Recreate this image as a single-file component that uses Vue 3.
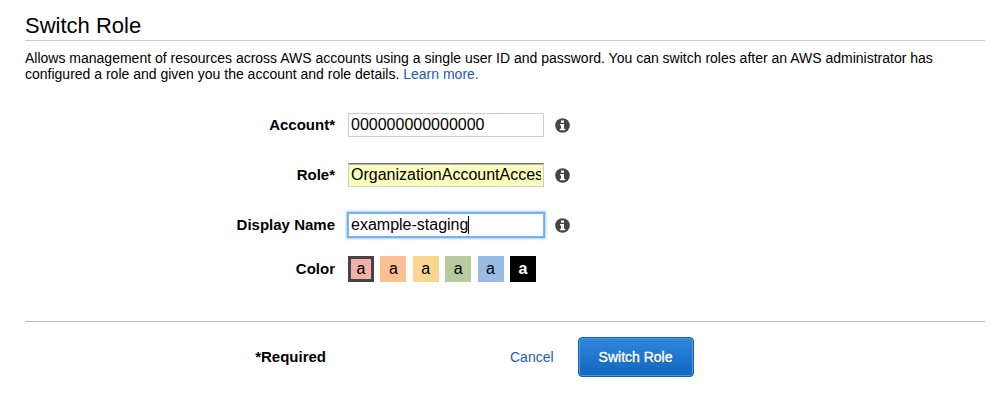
<script setup>
import { ref, onMounted } from 'vue'

const fields = ref([
  { id: 'account', label: 'Account*', value: '000000000000000', kind: 'plain' },
  { id: 'role', label: 'Role*', value: 'OrganizationAccountAccessRole', kind: 'filled' },
  { id: 'displayName', label: 'Display Name', value: 'example-staging', kind: 'active' }
])

const colors = ['red', 'orange', 'yellow', 'green', 'blue', 'black']
const color = ref('red')

onMounted(() => {
  const input = document.getElementById('displayName')
  input.focus()
  input.setSelectionRange(input.value.length, input.value.length)
})
</script>

<template>
  <main class="page">
    <header>
      <h1>Switch Role</h1>
      <p class="intro">
        <span>Allows management of resources across AWS accounts using a single user ID and password. You can switch roles after an AWS administrator has configured a role and given you the account and role details.</span> <a href="#">Learn more.</a>
      </p>
    </header>

    <form @submit.prevent>
      <div class="fields">
        <div v-for="f in fields" :key="f.id" class="row">
          <label class="name" :for="f.id">{{ f.label }}</label>
          <div class="box">
            <input :id="f.id" v-model="f.value" type="text" :class="f.kind" autocomplete="off" spellcheck="false" />
            <span v-if="f.kind === 'active'" class="cursor-line" aria-hidden="true"><span class="typed">{{ f.value }}</span></span>
          </div>
          <button type="button" class="info" :aria-label="'About ' + f.label">
            <svg viewBox="0 0 15 15" width="15" height="15" aria-hidden="true">
              <circle cx="7.5" cy="7.5" r="7.3" fill="#444" />
              <path d="M6 2.5h3v2.2H6zM5 6h4v4.7h1.2v1.6H4.8v-1.6H6V7.6H5z" fill="#fff" />
            </svg>
          </button>
        </div>
        <div class="row colors" role="radiogroup" aria-labelledby="color-name">
          <span id="color-name" class="name">Color</span>
          <div class="swatches">
            <label v-for="c in colors" :key="c" class="swatch" :class="[c, { chosen: color === c }]">
              <input v-model="color" type="radio" name="color" :value="c" :aria-label="c" />a
            </label>
          </div>
        </div>
      </div>

      <footer>
        <span class="required">*Required</span>
        <div class="actions">
          <a href="#">Cancel</a>
          <button type="submit" class="submit">Switch Role</button>
        </div>
      </footer>
    </form>
  </main>
</template>

<style>
body {
  margin: 0;
  background: #fff;
}
</style>

<style scoped>
.page {
  padding: 14px 18px 28px 25px;
  color: #000;
  font: 14px/16px "Helvetica Neue", "Liberation Sans", Arial, sans-serif;
}
h1 {
  margin: 0;
  padding-bottom: 2px;
  border-bottom: 1px solid #ccc;
  font-size: 22px;
  line-height: 24px;
  font-weight: 400;
}
.intro {
  max-width: 930px;
  margin: 9px 0 0;
}
a {
  color: #1a5dba;
  text-decoration: none;
}
.fields {
  display: grid;
  gap: 26px;
  padding: 31px 0 39px;
}
.row {
  display: grid;
  grid-template-columns: 323px 196px auto;
  justify-content: start;
  align-items: center;
}
.name {
  padding-right: 13px;
  text-align: right;
  font-size: 15px;
  font-weight: 700;
}
.box {
  position: relative;
}
.box input {
  display: block;
  box-sizing: border-box;
  width: 100%;
  height: 24px;
  padding: 0 2px;
  border: 1px solid #ccc;
  border-radius: 0;
  outline: none;
  background: #fff;
  color: #000;
  font: 16px/20px "Helvetica Neue", "Liberation Sans", Arial, sans-serif;
}
.box .filled {
  border-top-color: #777;
  background: #faffbd;
  box-shadow: inset 0 1px 0 #b5b5a5;
}
.box .active {
  border-color: #7db3ee;
  box-shadow: 0 0 0 1px #72aeed, 0 0 2px 2px #a5cdf8;
  caret-color: transparent;
}
.cursor-line {
  position: absolute;
  inset: 3px;
  overflow: hidden;
  pointer-events: none;
  font-size: 16px;
  line-height: 18px;
}
.typed {
  display: inline-block;
  border-right: 1px solid #000;
  color: transparent;
}
.info {
  display: block;
  height: 16px;
  margin-left: 11px;
  padding: 0;
  border: 0;
  background: none;
}
.info svg {
  display: block;
}
.swatches {
  display: flex;
  justify-content: space-between;
  width: 188px;
}
.colors {
  margin-top: -7px;
}
.swatch {
  display: grid;
  place-items: center;
  box-sizing: border-box;
  width: 26px;
  height: 26px;
  font-size: 16px;
  line-height: 20px;
}
.swatch input {
  position: absolute;
  margin: 0;
  opacity: 0;
}
.red { background: #f2b0a9; }
.orange { background: #fbbf93; }
.yellow { background: #fad791; }
.green { background: #b7ca9d; }
.blue { background: #99bce3; }
.black {
  background: #000;
  color: #fff;
  font-weight: 700;
}
.chosen {
  border: 3px solid #444;
}
footer {
  display: grid;
  grid-template-columns: 301px auto;
  justify-content: start;
  align-items: center;
  column-gap: 184px;
  padding-top: 15px;
  border-top: 1px solid #bbb;
}
.required {
  text-align: right;
  font-size: 15px;
  font-weight: 700;
}
.actions {
  display: flex;
  align-items: center;
  gap: 24px;
}
.submit {
  height: 40px;
  padding: 0 20px;
  border: 1px solid #1261b3;
  border-radius: 4px;
  background: linear-gradient(#2f86dc, #1067bd);
  box-shadow: inset 0 0 0 1px #4d98e0;
  color: #fff;
  font: 14px/16px "Helvetica Neue", "Liberation Sans", Arial, sans-serif;
  -webkit-text-stroke: 0.4px #fff;
  text-shadow: 0 1px 1px #0a4a8c;
}
</style>
